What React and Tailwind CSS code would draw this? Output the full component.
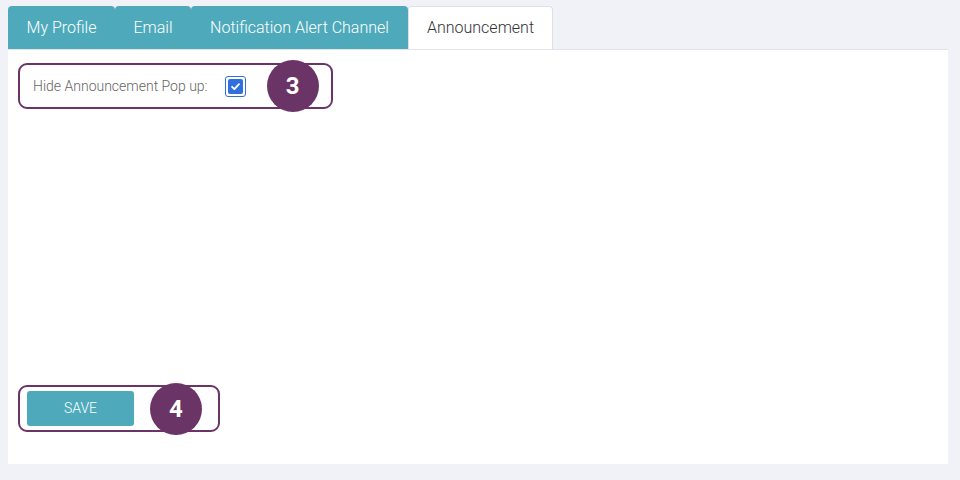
import React, { useState } from "react";

const tabs = [
  { label: "My Profile", w: "w-[107px]" },
  { label: "Email", w: "w-[76px]" },
  { label: "Notification Alert Channel", w: "w-[217px]" },
  { label: "Announcement", w: "w-[145px]" },
];

const Badge = ({ n }) => (
  <div className="w-[52px] h-[52px] rounded-full bg-[#6b3467] text-white flex items-center justify-center text-[24px] font-bold shrink-0">
    {n}
  </div>
);

export default function App() {
  const [active, setActive] = useState(3);
  const [hide, setHide] = useState(true);

  return (
    <div className="w-[960px] h-[480px] bg-[#f1f2f7] pl-2 pt-[6px] font-['Roboto',sans-serif]">
      {/* tabs */}
      <div className="flex h-[43px]">
        {tabs.map((t, i) => (
          <button
            key={t.label}
            onClick={() => setActive(i)}
            className={`${
              active === i
                ? "bg-white text-[#333] border border-b-0 border-[#dde0e6]"
                : "bg-[#4eaabb] text-white"
            } ${t.w} text-[16px] font-light rounded-t-[4px] h-full whitespace-nowrap`}
          >
            {t.label}
          </button>
        ))}
      </div>

      <div className="w-[940px] h-[415px] bg-white border-t border-[#e3e5ea] px-[10px] pt-[13px] flex flex-col">
        {/* hide popup */}
        <div className="w-[315px] h-[46px] border-2 border-[#6b3467] rounded-[9px] flex items-center pl-[13px]">
          <span className="text-[14px] font-light text-[#666]">Hide Announcement Pop up:</span>
          <button
            onClick={() => setHide(!hide)}
            className="ml-[17px] w-[21px] h-[21px] rounded-[3px] border border-[#2f6fde] bg-white flex items-center justify-center"
          >
            <div
              className={`w-[15px] h-[15px] rounded-[2px] flex items-center justify-center ${
                hide ? "bg-[#2f6fde]" : "bg-white"
              }`}
            >
              {hide && (
                <svg width="11" height="11" viewBox="0 0 12 12" fill="none">
                  <path d="M2.3 6.3l2.5 2.5L9.8 3.4" stroke="#fff" strokeWidth="2" strokeLinecap="round" strokeLinejoin="round" />
                </svg>
              )}
            </div>
          </button>
          <div className="ml-[21px]">
            <Badge n="3" />
          </div>
        </div>

        <div className="flex-1" />

        {/* save */}
        <div className="w-[202px] h-[47px] border-2 border-[#6b3467] rounded-[9px] flex items-center pl-[7px] mb-[32px]">
          <button className="w-[107px] h-[35px] bg-[#4eaabb] text-white text-[14px] font-light rounded-[3px]">
            SAVE
          </button>
          <div className="ml-[16px]">
            <Badge n="4" />
          </div>
        </div>
      </div>
    </div>
  );
}
